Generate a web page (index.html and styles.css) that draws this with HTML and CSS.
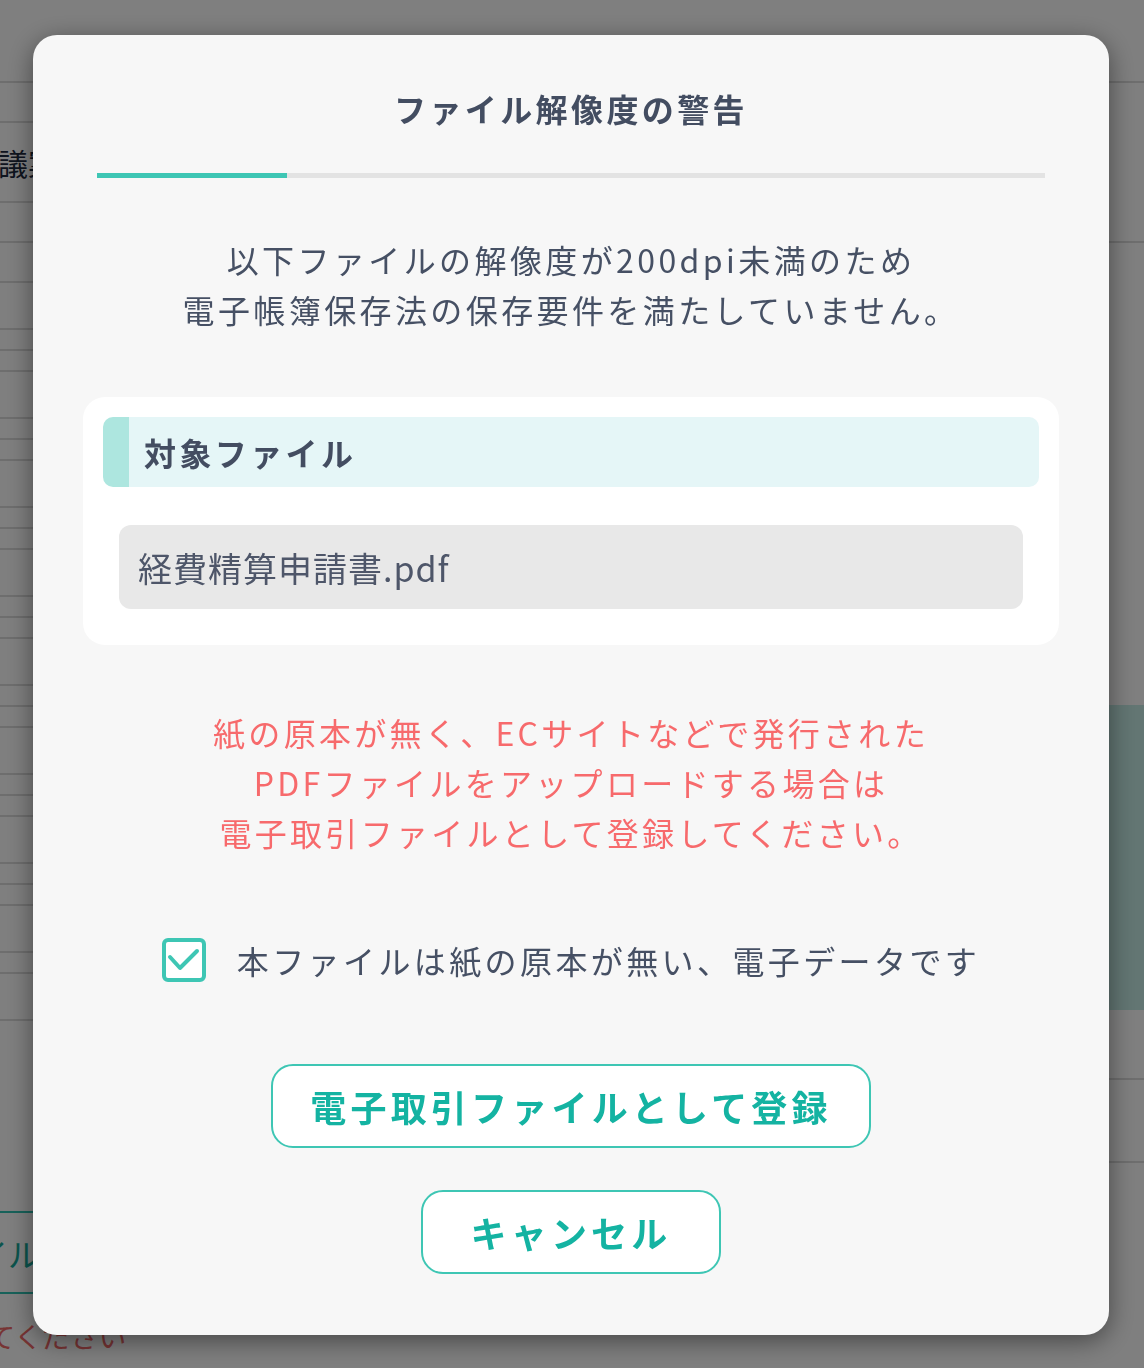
FILE: index.html
```html
<!doctype html>
<html lang="ja">
<head>
    <meta charset="utf-8">
    <title>ファイル解像度の警告</title>
    <link rel="stylesheet" href="styles.css">
</head>
<body>
    <div class="page">
        <div class="page-main">
            <div class="bg-row bg-row-head"></div>
            <div class="bg-row bg-row-s"></div>
            <div class="bg-row bg-row-l"><span class="bg-text">議案</span></div>
            <div class="bg-row bg-row-s"></div>
            <div class="bg-row bg-row-s"></div>
            <div class="bg-row bg-row-m"></div>
            <div class="bg-row bg-row-xs"></div>
            <div class="bg-row bg-row-xs"></div>
            <div class="bg-row bg-row-m"></div>
            <div class="bg-row bg-row-xs"></div>
            <div class="bg-row bg-row-xs"></div>
            <div class="bg-row bg-row-m"></div>
            <div class="bg-row bg-row-xs"></div>
            <div class="bg-row bg-row-xs"></div>
            <div class="bg-row bg-row-m"></div>
            <div class="bg-row bg-row-xs"></div>
            <div class="bg-row bg-row-xs"></div>
            <div class="bg-row bg-row-m"></div>
            <div class="bg-row bg-row-xs"></div>
            <div class="bg-row bg-row-xs"></div>
            <div class="bg-row bg-row-m"></div>
            <div class="bg-row bg-row-xs"></div>
            <div class="bg-row bg-row-xs"></div>
            <div class="bg-row bg-row-m"></div>
            <div class="bg-row bg-row-xs"></div>
            <div class="bg-row bg-row-xs"></div>
            <div class="bg-row bg-row-m"></div>
            <div class="bg-row bg-row-xs"></div>
            <div class="bg-row bg-row-m"></div>
            <div class="bg-tab">ファイル</div>
            <p class="bg-note">してください</p>
        </div>
        <div class="page-side">
            <div class="bg-row bg-row-head"></div>
            <div class="bg-row bg-row-side"></div>
            <div class="bg-gap"></div>
            <div class="bg-panel"></div>
            <div class="bg-row bg-row-text"><span class="bg-text">亘</span></div>
            <div class="bg-row bg-row-side2"></div>
        </div>
    </div>

    <div class="overlay">
        <div class="modal">
            <h2 class="modal-title">ファイル解像度の警告</h2>
            <div class="progress"><div class="progress-fill" style="width: 20%;"></div></div>

            <p class="modal-desc">
                以下ファイルの解像度が200dpi未満のため<br>
                電子帳簿保存法の保存要件を満たしていません。
            </p>

            <div class="file-card">
                <div class="file-card-head">対象ファイル</div>
                <div class="file-item">経費精算申請書.pdf</div>
            </div>

            <p class="modal-warn">
                紙の原本が無く、ECサイトなどで発行された<br>
                PDFファイルをアップロードする場合は<br>
                電子取引ファイルとして登録してください。
            </p>

            <label class="check-row">
                <span class="check-box">
                    <svg width="36" height="36" viewBox="0 0 36 36">
                        <polyline points="4,15 14,26 31,9" fill="none" stroke="#3ec6b4" stroke-width="4" stroke-linecap="round" stroke-linejoin="round"/>
                    </svg>
                </span>
                <span class="check-label">本ファイルは紙の原本が無い、電子データです</span>
            </label>

            <div class="modal-actions">
                <button class="btn">電子取引ファイルとして登録</button>
                <button class="btn btn-cancel">キャンセル</button>
            </div>
        </div>
    </div>
</body>
</html>
```

FILE: styles.css
```css
body {
    margin: 0;
    background-color: #ffffff;
    font-family: "Noto Sans CJK JP", "Noto Sans", sans-serif;
    color: #465064;
    overflow: hidden;
}

/* page behind the dialog */
.page {
    display: grid;
    grid-template-columns: 1fr 320px;
    height: 1368px;
}
.bg-row {
    border-bottom: 2px solid #dcdcdc;
    box-sizing: border-box;
}
.bg-row-head { height: 83px; }
.bg-row-s { height: 40px; }
.bg-row-l { height: 80px; display: flex; align-items: center; }
.bg-row-m { height: 47px; }
.bg-row-xs { height: 21px; }
.bg-text {
    font-size: 30px;
    color: #1e2a3e;
    margin-left: -2px;
}
.bg-tab {
    margin-top: 190px;
    margin-left: -88px;
    width: 300px;
    height: 83px;
    border-top: 2px solid #2fc4b4;
    border-bottom: 2px solid #2fc4b4;
    box-sizing: border-box;
    display: flex;
    align-items: center;
    font-size: 32px;
    color: #16a99a;
}
.bg-note {
    margin: 22px 0 0 -40px;
    font-size: 28px;
    line-height: 40px;
    color: #ee6868;
}
.bg-row-side { height: 160px; }
.bg-gap { height: 462px; }
.bg-panel {
    height: 305px;
    background-color: #c6ede7;
}
.bg-row-text {
    height: 70px;
    display: flex;
    align-items: center;
    padding-left: 142px;
}
.bg-row-side2 { height: 83px; }

/* dialog */
.overlay {
    position: fixed;
    inset: 0;
    background-color: rgba(0, 0, 0, 0.5);
}
.modal {
    width: 1076px;
    height: 1300px;
    margin: 35px 0 0 33px;
    box-sizing: border-box;
    padding: 49px 50px 0;
    background-color: #f7f7f7;
    border-radius: 24px;
    box-shadow: 0 6px 26px rgba(0, 0, 0, 0.45);
    text-align: center;
}
.modal-title {
    margin: 0;
    font-size: 32px;
    line-height: 48px;
    font-weight: 700;
    letter-spacing: 3.4px;
    color: #434d61;
}
.progress {
    margin: 41px 14px 0;
    height: 5px;
    background-color: #e3e3e3;
}
.progress-fill {
    height: 100%;
    background-color: #3ec6b4;
}
.modal-desc {
    margin: 56px 0 0;
    font-size: 32px;
    line-height: 50px;
    letter-spacing: 3.4px;
}
.file-card {
    margin-top: 63px;
    padding: 20px 20px 36px;
    background-color: #ffffff;
    border-radius: 22px;
    text-align: left;
}
.file-card-head {
    height: 70px;
    display: flex;
    align-items: center;
    padding-left: 15px;
    background-color: #e5f6f7;
    border-left: 26px solid #ade6df;
    border-radius: 10px;
    font-size: 32px;
    font-weight: 700;
    letter-spacing: 3.4px;
    color: #434d61;
}
.file-item {
    margin: 38px 16px 0;
    height: 84px;
    display: flex;
    align-items: center;
    padding-left: 19px;
    background-color: #e8e8e8;
    border-radius: 12px;
    font-size: 34px;
    letter-spacing: 1px;
    color: #4e5669;
}
.modal-warn {
    margin: 62px 0 0;
    font-size: 32px;
    line-height: 50px;
    letter-spacing: 3.3px;
    color: #f76a6c;
}
.check-row {
    margin-top: 80px;
    display: flex;
    justify-content: center;
    align-items: center;
    gap: 31px;
    cursor: pointer;
}
.check-box {
    width: 44px;
    height: 44px;
    box-sizing: border-box;
    border: 4px solid #3ec6b4;
    border-radius: 6px;
    background-color: #ffffff;
    display: flex;
    align-items: center;
    justify-content: center;
}
.check-label {
    font-size: 32px;
    letter-spacing: 3.4px;
}
.modal-actions {
    margin-top: 81px;
    display: flex;
    flex-direction: column;
    align-items: center;
    gap: 42px;
}
.btn {
    height: 84px;
    min-width: 300px;
    padding: 0 37px;
    box-sizing: border-box;
    background-color: #ffffff;
    border: 2px solid #3ec6b4;
    border-radius: 22px;
    font-family: inherit;
    font-size: 36px;
    font-weight: 700;
    letter-spacing: 4.2px;
    color: #14b3a2;
    cursor: pointer;
}
.btn:hover {
    background-color: #effaf8;
}
```
